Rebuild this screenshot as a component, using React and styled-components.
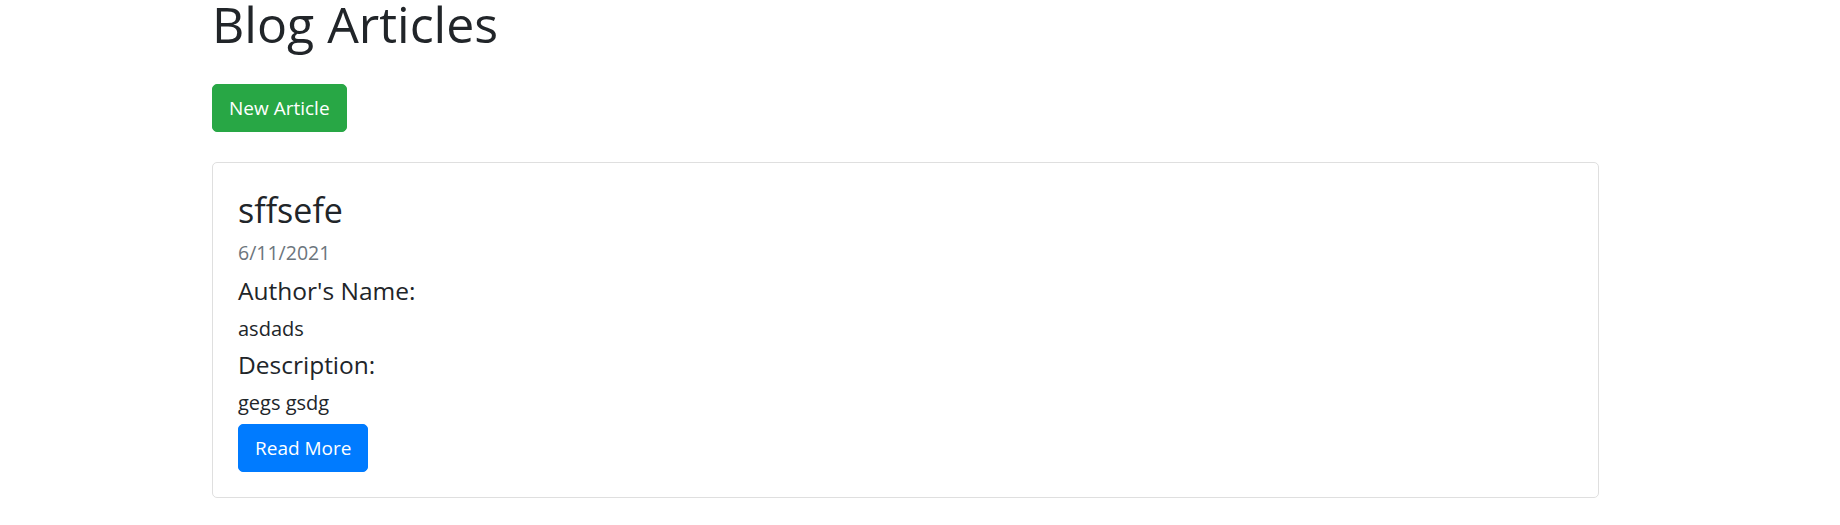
import React from 'react'
import styled, { createGlobalStyle } from 'styled-components'

const GlobalStyle = createGlobalStyle`
  body {
    margin: 0;
    background: #fff;
    color: #212529;
    font-family: 'Open Sans', 'Noto Sans', sans-serif;
  }
`

const Container = styled.div`
  width: 1387px;
  margin-left: 212px;
  display: flex;
  flex-direction: column;
  align-items: flex-start;
`

const PageTitle = styled.h1`
  margin: 0 0 35px;
  font-size: 50px;
  line-height: 49px;
  font-weight: 400;
  color: #212529;
`

const Button = styled.a`
  display: inline-flex;
  align-items: center;
  justify-content: center;
  box-sizing: border-box;
  height: 48px;
  padding: 0 16px;
  border-radius: 5px;
  font-size: 19px;
  color: #fff;
  text-decoration: none;
  cursor: pointer;
  background: ${props => (props.variant === 'success' ? '#28a745' : '#007bff')};
  border: 1px solid ${props => (props.variant === 'success' ? '#28a745' : '#007bff')};
`

const Card = styled.div`
  align-self: stretch;
  margin-top: 30px;
  border: 1px solid #dfdfdf;
  border-radius: 5px;
  padding: 25px;
  display: flex;
  flex-direction: column;
  align-items: flex-start;
`

const CardTitle = styled.h3`
  margin: 0 0 6px;
  font-size: 34px;
  line-height: 44px;
  font-weight: 400;
`

const CardSubtitle = styled.div`
  margin-bottom: 8px;
  font-size: 19.5px;
  line-height: 30px;
  color: #6c757d;
`

const FieldLabel = styled.h5`
  margin: 0 0 7.5px;
  font-size: 24.5px;
  line-height: 30px;
  font-weight: 400;
`

const FieldValue = styled.p`
  margin: 0 0 6.5px;
  font-size: 20px;
  line-height: 30px;
`

const articles = [
  {
    title: 'sffsefe',
    date: '6/11/2021',
    author: 'asdads',
    description: 'gegs gsdg',
  },
]

const ArticleCard = ({ article }) => (
  <Card>
    <CardTitle>{article.title}</CardTitle>
    <CardSubtitle>{article.date}</CardSubtitle>
    <FieldLabel>Author's Name:</FieldLabel>
    <FieldValue>{article.author}</FieldValue>
    <FieldLabel>Description:</FieldLabel>
    <FieldValue>{article.description}</FieldValue>
    <Button variant="primary">Read More</Button>
  </Card>
)

const App = () => (
  <React.Fragment>
    <GlobalStyle />
    <Container>
      <PageTitle>Blog Articles</PageTitle>
      <Button variant="success">New Article</Button>
      {articles.map(article => (
        <ArticleCard key={article.title} article={article} />
      ))}
    </Container>
  </React.Fragment>
)

export default App
